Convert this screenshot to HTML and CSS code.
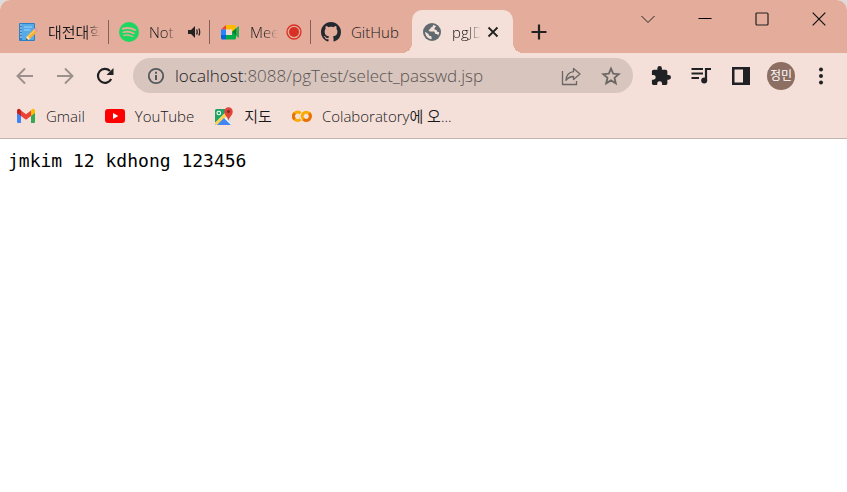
FILE: index.html
```html
<!DOCTYPE html>
<html lang="ko">
<head>
<meta charset="utf-8">
<meta name="viewport" content="width=device-width, initial-scale=1">
<title>pgJDBC</title>
<link rel="stylesheet" href="styles.css">
</head>
<body>
<div class="window">
  <header class="strip">
    <nav class="tabs">
      <a class="tab" href="#">
        <svg class="icon" viewBox="0 0 20 20"><rect x="1" y="1" width="16" height="18" rx="1" fill="#2f80c4"/><rect x="4" y="2" width="12" height="16" fill="#55aae8"/><path d="M2 3h2M2 6h2M2 9h2M2 12h2M2 15h2" stroke="#cfe6f5"/><path d="M6 5h8M6 8h6" stroke="#a5d5f8"/><path d="M8 18l1-4 7-7 3 3-7 7z" fill="#f6b13c"/><path d="M8 18l1-4 3 3z" fill="#fff0d0"/><path d="M8 18l.5-2 1.500 1.500z" fill="#333"/><path d="M15.500 7.500l2-2 3 3-2 2z" fill="#dda0a5"/><path d="M10 15l7-7" stroke="#ffd678"/></svg>
        <span class="tab-name">대전대학</span>
      </a>
      <a class="tab" href="#">
        <svg class="icon" viewBox="0 0 20 20"><circle cx="10" cy="10" r="10" fill="#1ed760"/><g fill="none" stroke="#e4ac9b" stroke-linecap="round"><path d="M3.800 6.800c4-1.200 8.700-.8 12.200 1.200" stroke-width="2"/><path d="M4.300 10.200c3.600-1 7.500-.6 10.600 1.200" stroke-width="1.700"/><path d="M4.800 13.400c3-.7 6.200-.4 8.900 1.100" stroke-width="1.400"/></g></svg>
        <span class="tab-name">Not</span>
        <svg class="sound" viewBox="0 0 14 14"><path d="M1 5h3l4-4v12L4 9H1z" fill="#222"/><path d="M9.500 4.500q1.500 2.500 0 5M11.800 3.500q1.800 3.500 0 7" fill="none" stroke="#222" stroke-width="1.300"/></svg>
      </a>
      <a class="tab" href="#">
        <svg class="icon" viewBox="0 0 20 20"><path d="M6 3v4.500H1z" fill="#ea4335"/><path d="M1 7.500h5V13H1z" fill="#2684fc"/><path d="M1 13h5v4.500H2.500Q1 17.500 1 16z" fill="#0066da"/><path d="M6 3h8.500Q16 3 16 4.500V8l-4 2.500v-3H6z" fill="#ffba00"/><path d="M6 13h6v-3l4 3v3q0 1.500-1.500 1.500H6z" fill="#00ac47"/><path d="M6 7.500h6V13H6z" fill="#f3d8cf"/><path d="M12 10l6-5.500q1-.7 1 .5v10q0 1.200-1 .5z" fill="#34a853"/><path d="M12 10l4-3.500v7z" fill="#00832d"/></svg>
        <span class="tab-name">Meet</span>
        <svg class="record" viewBox="0 0 16 16"><circle cx="8" cy="8" r="7" fill="none" stroke="#d93025" stroke-width="1.300"/><circle cx="8" cy="8" r="5" fill="#d93025"/></svg>
      </a>
      <a class="tab" href="#">
        <svg class="icon" viewBox="0 0 16 16"><path fill="#24292f" d="M8 0C3.580 0 0 3.580 0 8c0 3.540 2.290 6.530 5.470 7.590.4.070.55-.17.55-.38 0-.19-.01-.82-.01-1.490-2.010.37-2.530-.49-2.690-.94-.09-.23-.48-.94-.82-1.130-.28-.15-.68-.52-.01-.53.63-.01 1.080.58 1.230.82.72 1.210 1.870.87 2.330.66.070-.52.28-.87.51-1.070-1.780-.2-3.640-.89-3.640-3.950 0-.87.31-1.590.82-2.150-.08-.2-.36-1.020.08-2.120 0 0 .67-.21 2.200.82.64-.18 1.320-.27 2-.27s1.360.09 2 .27c1.530-1.040 2.200-.82 2.200-.82.44 1.100.16 1.920.08 2.120.51.56.82 1.270.82 2.150 0 3.070-1.870 3.750-3.650 3.950.29.25.54.73.54 1.480 0 1.070-.01 1.930-.01 2.200 0 .21.15.46.55.38A8.010 8.010 0 0 0 16 8c0-4.420-3.580-8-8-8z"/></svg>
        <span class="tab-name whole">GitHub</span>
      </a>
      <div class="tab active">
        <svg class="icon" viewBox="0 0 20 20"><circle cx="10" cy="10" r="9" fill="#5f6a70"/><path d="M11 2.800c.5 1.200-.2 2.200-1.500 2.400-.8.100-1 .6-1 1.400 0 .8-.6 1-1.600 1-.5 1.200.3 1.900 1.500 1.900h3c1.100 0 1.500.6 1.500 1.500 0 .8.400 1 1.300 1 1.200 0 1.700.6 1.800 1.600a7 7 0 0 0 1.200-3.600h-1.700c-.6-1.700-1.400-2.400-3-2.400-.3-1.600.6-2.600 2-3.300zM3 9.700l3.500 2.300c.2 1.500.8 2 2.300 2 .8.400 1 1.200.7 3.200A7.300 7.300 0 0 1 3 9.700z" fill="#f5e0d9"/></svg>
        <span class="tab-name">pgJDBC</span>
        <button class="close" aria-label="Close tab"><svg viewBox="0 0 12 12"><path d="M1.500 1.500l9 9M10.500 1.500l-9 9" stroke="#222" stroke-width="1.800"/></svg></button>
      </div>
    </nav>
    <button class="new-tab" aria-label="New tab"><svg viewBox="0 0 16 16"><path d="M8 .5v15M.5 8h15" stroke="#222" stroke-width="2.200"/></svg></button>
    <div class="controls">
      <button aria-label="Search tabs"><svg viewBox="0 0 14 14"><path d="M.5 4L7 10.500 13.500 4" fill="none" stroke="#222"/></svg></button>
      <button aria-label="Minimize"><svg viewBox="0 0 14 14"><path d="M.5 6.500h13" stroke="#000"/></svg></button>
      <button aria-label="Maximize"><svg viewBox="0 0 14 14"><rect x="1" y="1" width="12" height="12" rx="1" fill="none" stroke="#222" stroke-width="1.200"/></svg></button>
      <button aria-label="Close window"><svg viewBox="0 0 14 14"><path d="M.7.7l12.600 12.600M13.300.7L.7 13.300" stroke="#111" stroke-width="1.200"/></svg></button>
    </div>
  </header>

  <div class="toolbar">
    <button class="tool faded" aria-label="Back"><svg viewBox="0 0 20 20"><path d="M18 10H3M10 2.500L2.500 10l7.500 7.500" fill="none" stroke="currentColor" stroke-width="1.900"/></svg></button>
    <button class="tool faded" aria-label="Forward"><svg viewBox="0 0 20 20"><path d="M2 10h15M10 2.500l7.500 7.500-7.500 7.500" fill="none" stroke="currentColor" stroke-width="1.900"/></svg></button>
    <button class="tool" aria-label="Reload"><svg viewBox="0 0 20 20"><path d="M16.200 13a7 7 0 1 1-1.200-8" fill="none" stroke="currentColor" stroke-width="2.200"/><path d="M18.500 2v7h-7z" fill="currentColor"/></svg></button>
    <div class="omnibox">
      <svg class="info" viewBox="0 0 18 18"><circle cx="9" cy="9" r="7.200" fill="none" stroke="#55595d" stroke-width="1.800"/><path d="M9 8v5M9 4.800v2" stroke="#55595d" stroke-width="2"/></svg>
      <div class="url"><span class="host">localhost</span>:8088/pgTest/select_passwd.jsp</div>
      <button class="tool muted" aria-label="Share"><svg viewBox="0 0 20 20"><path d="M1.500 5v13.500h14V15" fill="none" stroke="currentColor" stroke-width="1.300"/><path d="M12.500 2.500L19 8l-6.500 5.500v-3c-3.500 0-5.500 1-7.500 4 .3-5 3-8.300 7.500-8.800z" fill="none" stroke="currentColor" stroke-width="1.300" stroke-linejoin="round"/></svg></button>
      <button class="tool muted" aria-label="Bookmark this page"><svg viewBox="0 0 20 20"><path d="M10 2.600l2.200 5.100 5.500.5-4.200 3.600 1.300 5.500-4.800-2.900-4.800 2.900 1.300-5.500-4.200-3.600 5.500-.5z" fill="none" stroke="currentColor" stroke-width="1.800"/></svg></button>
    </div>
    <button class="tool" aria-label="Extensions"><svg viewBox="1 1 22 22"><path fill="currentColor" d="M20.500 11H19V7c0-1.100-.9-2-2-2h-4V3.500a2.500 2.500 0 0 0-5 0V5H4c-1.100 0-2 .9-2 2v3.800h1.500a2.700 2.700 0 0 1 0 5.400H2V20c0 1.100.9 2 2 2h3.800v-1.500a2.700 2.700 0 0 1 5.400 0V22H17c1.100 0 2-.9 2-2v-4h1.500a2.500 2.500 0 0 0 0-5z"/></svg></button>
    <button class="tool" aria-label="Media"><svg viewBox="0 0 20 20"><path d="M.5 3h11.500M.5 7.500h11.500M.5 12h7.500" stroke="currentColor" stroke-width="2"/><path d="M15 14.500V3h5" fill="none" stroke="currentColor" stroke-width="2.200"/><circle cx="13.200" cy="14.500" r="3" fill="currentColor"/></svg></button>
    <button class="tool" aria-label="Side panel"><svg viewBox="0 0 20 20"><path fill="currentColor" fill-rule="evenodd" d="M1 1h18v18H1zM3.500 3.500v13H12v-13z"/></svg></button>
    <button class="tool" aria-label="Profile"><span class="avatar">정민</span></button>
    <button class="tool" aria-label="Menu"><svg viewBox="0 0 20 20" fill="currentColor"><circle cx="10" cy="3.500" r="2"/><circle cx="10" cy="10" r="2"/><circle cx="10" cy="16.500" r="2"/></svg></button>
  </div>

  <nav class="bookmarks">
    <a href="#"><svg class="icon" viewBox="0 0 20 20"><path d="M1 5v11q0 1 1 1h3V8z" fill="#4285f4"/><path d="M15 8v9h3q1 0 1-1V5z" fill="#34a853"/><path d="M15 4.500V10l4-3V5c0-2-2-2.800-3.400-1.500z" fill="#fbbc04"/><path d="M5 10V4.500l5 3.700 5-3.700V10l-5 3.800z" fill="#ea4335"/><path d="M1 5v2l4 3V4.500l-.6-1C3 2.200 1 3 1 5z" fill="#c5221f"/></svg>Gmail</a>
    <a href="#"><svg class="icon" viewBox="0 0 20 20"><rect y="3" width="20" height="14" rx="3" fill="#f00"/><path d="M8 7l5.300 3L8 13z" fill="#fff"/></svg>YouTube</a>
    <a href="#"><svg class="icon" viewBox="0 0 20 20"><rect x="1" y="3" width="16" height="16" rx="1.500" fill="#1fa463"/><path d="M1 17L13 5l4 4v10H2z" fill="#fff"/><path d="M1 17L14 4l2.500 2.500L4 19H2.500z" fill="#ffd04b"/><path d="M3 19l7-7 7 7z" fill="#4285f4"/><path d="M11 11l6-3v10z" fill="#dce1e5"/><circle cx="4.800" cy="7" r="1.800" fill="none" stroke="#fff" stroke-width="1.100"/><path d="M14.500 15c-.4-4-4.200-5.300-4.200-9.500a4.200 4.200 0 0 1 8.400 0c0 4.200-3.800 5.500-4.200 9.500z" fill="#e04438"/><circle cx="14.500" cy="5.500" r="1.500" fill="#7d2a25"/></svg>지도</a>
    <a href="#"><svg class="icon" viewBox="0 0 20 20"><g fill="none" stroke-width="3"><path d="M8.600 7.300a4.200 4.200 0 1 0 0 6" stroke="#f9ab00"/><circle cx="14.300" cy="10.300" r="4.100" stroke="#f9ab00"/><path d="M11.400 13.200a4.100 4.100 0 0 0 5.800-5.800" stroke="#e8710a"/><path d="M2.700 7.300a4.200 4.200 0 0 0 0 6" stroke="#e8710a"/></g></svg>Colaboratory에 오...</a>
  </nav>

  <main class="page">jmkim 12 kdhong 123456</main>
</div>
</body>
</html>
```
FILE: styles.css
```css
* {
  box-sizing: border-box;
}

body {
  margin: 0;
  background: #dcdcdc;
  color: #16181b;
  font: 350 15px/20px "Open Sans", "Noto Sans CJK KR", sans-serif;
}

a {
  color: inherit;
  text-decoration: none;
}

button {
  display: flex;
  align-items: center;
  justify-content: center;
  padding: 0;
  border: 0;
  background: none;
  color: inherit;
  font: inherit;
}

svg {
  display: block;
  flex: none;
}

.icon {
  width: 20px;
  height: 20px;
}

.window {
  display: flex;
  flex-direction: column;
  min-height: 100vh;
  overflow: hidden;
  border-radius: 10px 10px 0 0;
  background: #fff;
}

.strip {
  display: flex;
  height: 53px;
  padding-left: 8px;
  background: #e4ac9b;
}

.tabs {
  display: flex;
  padding-top: 10px;
}

.tab {
  position: relative;
  display: flex;
  align-items: center;
  width: 101px;
  padding: 0 9px 0 10px;
}

.tab:not(.active)::after {
  content: "";
  position: absolute;
  right: 0;
  top: 10px;
  width: 1px;
  height: 24px;
  background: #876059;
}

.tab:nth-child(4)::after {
  display: none;
}

.tab-name {
  flex: 1;
  min-width: 0;
  margin: 0 8px 0 10px;
  overflow: hidden;
  white-space: nowrap;
  mask-image: linear-gradient(to left, transparent, #000 14px);
}

.tab:first-child .tab-name {
  margin-right: 0;
}

.tab-name.whole {
  flex: none;
  mask-image: none;
}

.sound,
.record {
  width: 16px;
  height: 16px;
}

.sound {
  width: 14px;
  height: 14px;
}

.active {
  border-radius: 10px 10px 0 0;
  background: #f5e0d9;
}

.active .tab-name {
  margin-right: 6px;
}

.active::before,
.active::after {
  content: "";
  position: absolute;
  bottom: 0;
  width: 10px;
  height: 10px;
}

.active::before {
  right: 100%;
  background: radial-gradient(circle at 0 0, transparent 10px, #f5e0d9 10px);
}

.active::after {
  left: 100%;
  background: radial-gradient(circle at 100% 0, transparent 10px, #f5e0d9 10px);
}

.active {
  padding-right: 14px;
}

.close {
  width: 12px;
  height: 20px;
}

.close svg {
  width: 12px;
  height: 12px;
}

.new-tab {
  width: 32px;
  margin: 10px 0 0 10px;
}

.new-tab svg {
  width: 16px;
  height: 16px;
}

.controls {
  display: flex;
  height: 37px;
  margin-left: auto;
}

.controls button {
  width: 57px;
}

.controls svg {
  width: 14px;
  height: 14px;
}

.toolbar {
  display: flex;
  align-items: center;
  height: 45px;
  padding: 0 6px 0 5px;
  background: #f5e0d9;
  color: #202124;
}

.tool {
  flex: none;
  width: 40px;
  height: 35px;
}

.tool svg {
  width: 20px;
  height: 20px;
}

.faded {
  color: #9b908c;
}

.muted {
  color: #6b6664;
}

.omnibox {
  display: flex;
  flex: 1;
  align-items: center;
  min-width: 0;
  height: 35px;
  margin: 0 8px;
  padding: 0 2px 0 14px;
  border-radius: 18px;
  background: #d7c5be;
}

.info {
  width: 18px;
  height: 18px;
  margin-right: 10px;
}

.url {
  flex: 1;
  min-width: 0;
  overflow: hidden;
  color: #5a5452;
  font-size: 17px;
  line-height: 24px;
  white-space: nowrap;
}

.host {
  color: #202124;
}

.avatar {
  width: 28px;
  height: 28px;
  border-radius: 50%;
  background: #8d6e63;
  color: #fff;
  font-size: 12px;
  font-weight: 400;
  line-height: 28px;
}

.bookmarks {
  display: flex;
  gap: 20px;
  height: 41px;
  padding: 8px 16px 0;
  border-bottom: 1px solid #c4b3ae;
  background: #f5e0d9;
  white-space: nowrap;
}

.bookmarks a {
  display: flex;
  align-items: center;
  gap: 10px;
  height: 20px;
}

.page {
  flex: 1;
  padding: 10px 8px;
  color: #000;
  font: 18px/24px "DejaVu Sans Mono", monospace;
}
```
